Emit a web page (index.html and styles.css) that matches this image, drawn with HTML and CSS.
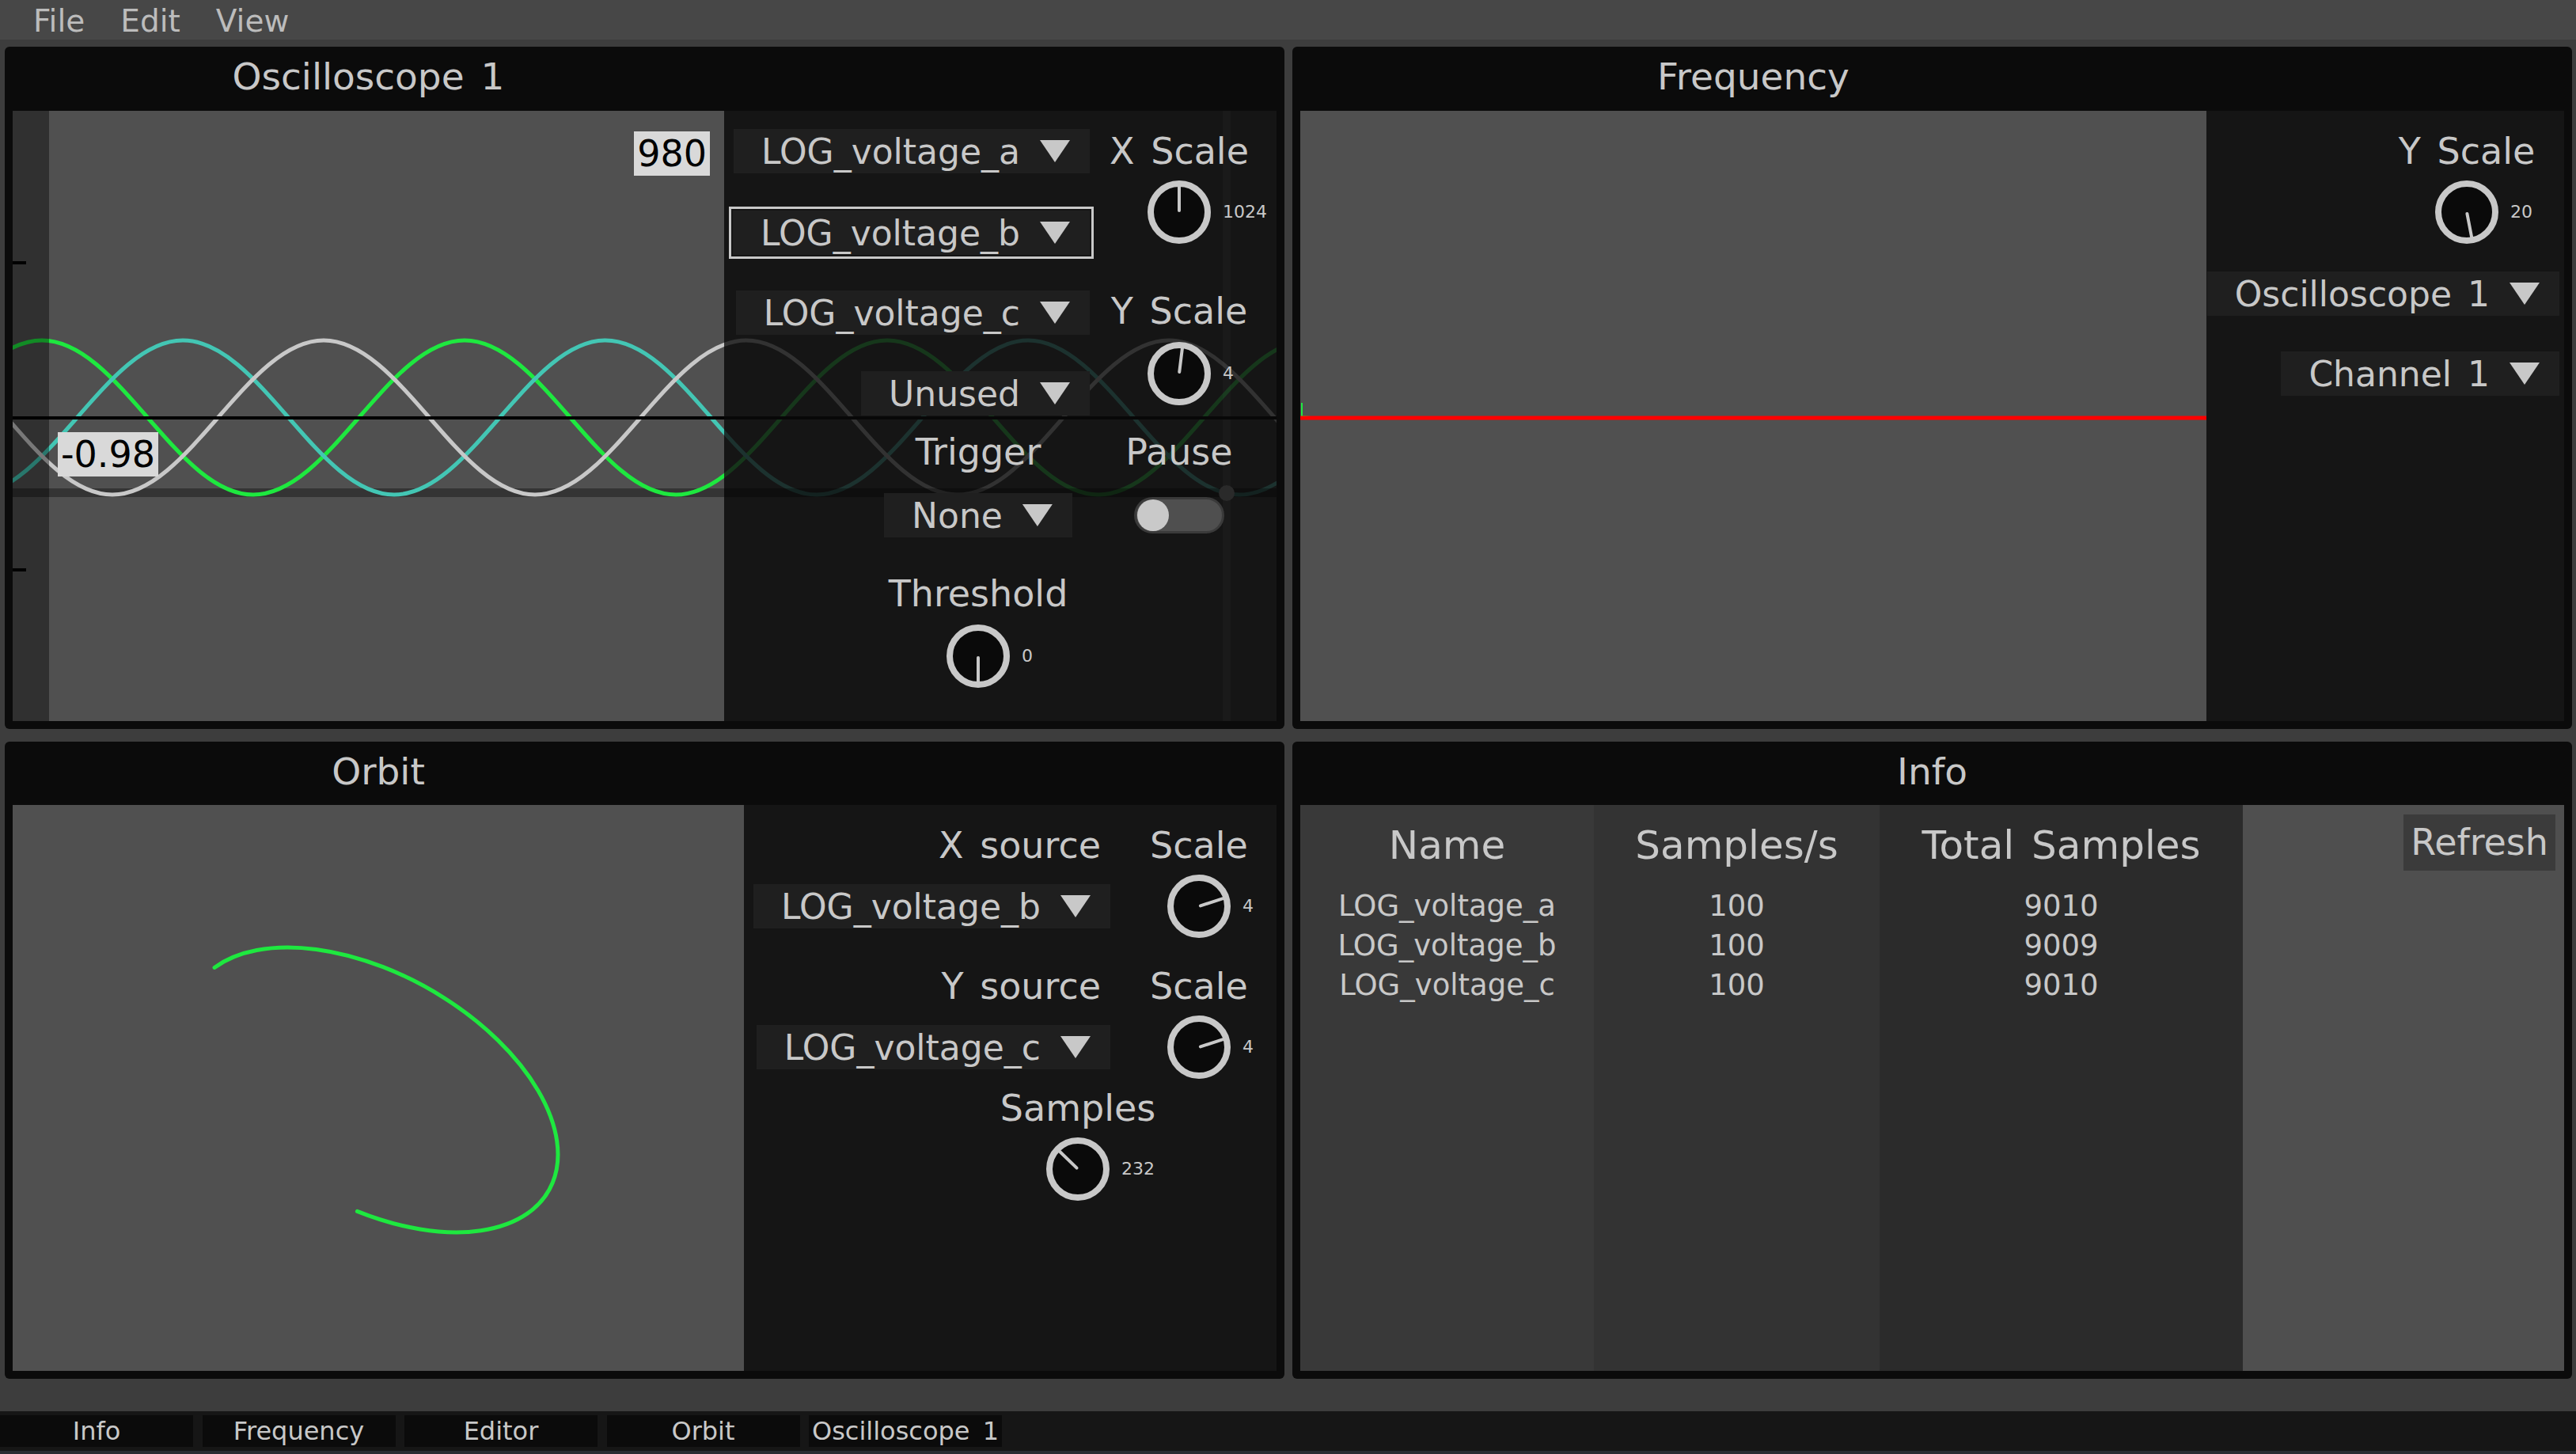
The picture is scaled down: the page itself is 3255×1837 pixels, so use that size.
FILE: index.html
```html
<!DOCTYPE html>
<html>
<head>
<meta charset="utf-8">
<title>Scope</title>
<link rel="stylesheet" href="styles.css">
</head>
<body>
<div class="app">
  <nav class="menubar"><span>File</span><span>Edit</span><span>View</span></nav>

  <main class="workspace">
    <!-- Oscilloscope -->
    <section class="panel scope">
      <header class="panel-head"><h2 class="title">Oscilloscope 1</h2></header>
      <div class="panel-body">
        <div class="plot">
          <svg class="layer" viewBox="16 140 899 771" preserveAspectRatio="none">
            <rect x="16" y="617" width="899" height="11" fill="rgba(0,0,0,0.35)"/>
            <path class="w-green" d="M-214,625 C-117,625 -44,430 53,430 S223,625 320,625 S490,430 587,430 S757,625 854,625 S1024,430 1121,430 S1291,625 1388,625 S1558,430 1655,430"/>
            <path class="w-teal" d="M-36,625 C61,625 134,430 231,430 S401,625 498,625 S668,430 765,430 S935,625 1032,625 S1202,430 1299,430 S1469,625 1566,625 S1736,430 1833,430"/>
            <path class="w-gray" d="M-125,430 C-28,430 45,625 142,625 S312,430 409,430 S579,625 676,625 S846,430 943,430 S1113,625 1210,625 S1380,430 1477,430 S1647,625 1744,625"/>
            <line x1="16" y1="528" x2="915" y2="528" stroke="#000" stroke-width="4"/>
            <rect x="16" y="140" width="46" height="771" fill="rgba(0,0,0,0.4)"/>
            <line x1="16" y1="332" x2="33" y2="332" stroke="#000" stroke-width="4"/>
            <line x1="16" y1="720" x2="33" y2="720" stroke="#000" stroke-width="4"/>
          </svg>
          <span class="badge badge-max">980</span>
          <span class="badge badge-cur">-0.98</span>
        </div>
        <div class="controls scope-controls">
          <svg class="layer" viewBox="915 140 698 771" preserveAspectRatio="none">
            <rect x="1545" y="140" width="10" height="771" fill="rgba(255,255,255,0.025)"/>
            <g opacity="0.16">
              <path class="w-green" d="M-214,625 C-117,625 -44,430 53,430 S223,625 320,625 S490,430 587,430 S757,625 854,625 S1024,430 1121,430 S1291,625 1388,625 S1558,430 1655,430"/>
              <path class="w-teal" d="M-36,625 C61,625 134,430 231,430 S401,625 498,625 S668,430 765,430 S935,625 1032,625 S1202,430 1299,430 S1469,625 1566,625 S1736,430 1833,430"/>
              <path class="w-gray" d="M-125,430 C-28,430 45,625 142,625 S312,430 409,430 S579,625 676,625 S846,430 943,430 S1113,625 1210,625 S1380,430 1477,430 S1647,625 1744,625"/>
            </g>
            <rect x="915" y="617" width="698" height="11" fill="rgba(0,0,0,0.3)"/>
            <line x1="915" y1="528" x2="1613" y2="528" stroke="#080808" stroke-width="4"/>
            <circle cx="1550" cy="623" r="10" fill="#2a2a2a"/>
          </svg>

          <div class="col scope-left">
            <div class="dd dd-a"><span>LOG_voltage_a</span><i class="arrow"></i></div>
            <div class="dd dd-b focus"><span>LOG_voltage_b</span><i class="arrow"></i></div>
            <div class="dd dd-c"><span>LOG_voltage_c</span><i class="arrow"></i></div>
            <div class="dd dd-u"><span>Unused</span><i class="arrow"></i></div>
            <div class="trig">
              <div class="label">Trigger</div>
              <div class="dd dd-none"><span>None</span><i class="arrow"></i></div>
              <div class="label thr-label">Threshold</div>
              <div class="knob thr-knob" style="--a:180deg"><i class="needle"></i><span class="kval">0</span></div>
            </div>
          </div>

          <div class="col scope-right">
            <div class="label xs-label">X Scale</div>
            <div class="knob xs-knob" style="--a:0deg"><i class="needle"></i><span class="kval">1024</span></div>
            <div class="label ys-label">Y Scale</div>
            <div class="knob ys-knob" style="--a:7deg"><i class="needle"></i><span class="kval">4</span></div>
            <div class="label pause-label">Pause</div>
            <div class="toggle"></div>
          </div>
        </div>
      </div>
    </section>

    <!-- Frequency -->
    <section class="panel freq">
      <header class="panel-head"><h2 class="title">Frequency</h2></header>
      <div class="panel-body">
        <div class="plot">
          <svg class="layer" viewBox="1643 140 1145 771" preserveAspectRatio="none">
            <polyline points="1645,509 1645,526 1656,527" fill="none" stroke="#1ee83f" stroke-width="2"/>
            <line x1="1643" y1="528" x2="2788" y2="528" stroke="#ff0000" stroke-width="5"/>
          </svg>
        </div>
        <div class="controls freq-controls">
          <div class="fys">
            <div class="label">Y Scale</div>
            <div class="knob fys-knob" style="--a:169deg"><i class="needle"></i><span class="kval">20</span></div>
          </div>
          <div class="dd dd-src"><span>Oscilloscope 1</span><i class="arrow"></i></div>
          <div class="dd dd-ch"><span>Channel 1</span><i class="arrow"></i></div>
        </div>
      </div>
    </section>

    <!-- Orbit -->
    <section class="panel bottom orbit">
      <header class="panel-head"><h2 class="title">Orbit</h2></header>
      <div class="panel-body">
        <div class="plot">
          <svg class="layer" viewBox="16 1017 924 715" preserveAspectRatio="none">
            <path d="M271,1222.4 A257.2,146.6 29.6 1 1 451.4,1530.4" fill="none" stroke="#1ee83f" stroke-width="5" stroke-linecap="round"/>
          </svg>
        </div>
        <div class="controls orbit-controls">
          <div class="orow orow-lab1">
            <div class="ocell-l"><span class="label src-label">X source</span></div>
            <div class="ocell-r"><span class="label">Scale</span></div>
          </div>
          <div class="orow orow-ctl">
            <div class="ocell-l"><div class="dd"><span>LOG_voltage_b</span><i class="arrow"></i></div></div>
            <div class="ocell-r"><div class="knob" style="--a:72deg"><i class="needle"></i><span class="kval">4</span></div></div>
          </div>
          <div class="orow orow-lab2">
            <div class="ocell-l"><span class="label src-label">Y source</span></div>
            <div class="ocell-r"><span class="label">Scale</span></div>
          </div>
          <div class="orow orow-ctl">
            <div class="ocell-l"><div class="dd"><span>LOG_voltage_c</span><i class="arrow"></i></div></div>
            <div class="ocell-r"><div class="knob" style="--a:72deg"><i class="needle"></i><span class="kval">4</span></div></div>
          </div>
          <div class="samples">
            <div class="label">Samples</div>
            <div class="knob samp-knob" style="--a:-46deg"><i class="needle"></i><span class="kval">232</span></div>
          </div>
        </div>
      </div>
    </section>

    <!-- Info -->
    <section class="panel bottom info">
      <header class="panel-head"><h2 class="title">Info</h2></header>
      <div class="panel-body">
        <div class="info-table">
          <div class="icol c1">
            <div class="ihead">Name</div>
            <div class="irow first">LOG_voltage_a</div>
            <div class="irow">LOG_voltage_b</div>
            <div class="irow">LOG_voltage_c</div>
          </div>
          <div class="icol c2">
            <div class="ihead">Samples/s</div>
            <div class="irow first">100</div>
            <div class="irow">100</div>
            <div class="irow">100</div>
          </div>
          <div class="icol c3">
            <div class="ihead">Total Samples</div>
            <div class="irow first">9010</div>
            <div class="irow">9009</div>
            <div class="irow">9010</div>
          </div>
          <div class="icol c4">
            <button class="refresh">Refresh</button>
          </div>
        </div>
      </div>
    </section>
  </main>

  <footer class="statusbar">
    <div class="tab">Info</div>
    <div class="tab">Frequency</div>
    <div class="tab">Editor</div>
    <div class="tab">Orbit</div>
    <div class="tab">Oscilloscope 1</div>
  </footer>
</div>
</body>
</html>
```

FILE: styles.css
```css
* { box-sizing: border-box; margin: 0; padding: 0; }

html, body {
  width: 3255px;
  height: 1837px;
  overflow: hidden;
}

body {
  background: #3d3d3d;
  font-family: "DejaVu Sans", "Liberation Sans", sans-serif;
  color: #c8c8c8;
  font-size: 46px;
  word-spacing: 6px;
}

.app {
  display: flex;
  flex-direction: column;
  height: 1837px;
}

/* ---------- menu ---------- */
.menubar {
  height: 50px;
  flex: none;
  background: #474747;
  display: flex;
  gap: 45px;
  padding: 3px 0 0 42px;
  font-size: 39px;
  line-height: 47px;
  color: #bcbcbc;
}

/* ---------- workspace ---------- */
.workspace {
  flex: 1;
  display: grid;
  grid-template-columns: 1617px 1617px;
  grid-template-rows: 862px 805px;
  gap: 16px 10px;
  padding: 9px 5px 0 6px;
  align-content: start;
}

.panel {
  background: #0b0b0b;
  border-radius: 6px;
  padding: 0 10px 10px;
  display: flex;
  flex-direction: column;
  min-height: 0;
}

.scope { --plot-w: 899px; }
.freq  { --plot-w: 1145px; }
.orbit { --plot-w: 924px; }
.info  { --plot-w: 1597px; }

.panel-head {
  height: 81px;
  flex: none;
  display: flex;
}
.panel.bottom .panel-head { height: 80px; }

.title {
  width: var(--plot-w);
  text-align: center;
  font-weight: normal;
  font-size: 47px;
  line-height: 76px;
  white-space: nowrap;
}

.panel-body {
  flex: 1;
  display: flex;
  min-height: 0;
}

.plot {
  width: var(--plot-w);
  flex: none;
  background: #505050;
  position: relative;
  overflow: hidden;
}

.controls {
  flex: 1;
  background: #151515;
  position: relative;
  overflow: hidden;
}

.layer {
  position: absolute;
  left: 0;
  top: 0;
  width: 100%;
  height: 100%;
  display: block;
}

.w-green, .w-teal, .w-gray { fill: none; stroke-width: 5; }
.w-green { stroke: #1ee83f; }
.w-teal  { stroke: #43c6b4; }
.w-gray  { stroke: #c8c8c8; }

.badge {
  position: absolute;
  background: #d9d9d9;
  color: #000;
  font-size: 46px;
  line-height: 56px;
  padding: 0 4px;
  word-spacing: 0;
}
.badge-max { right: 18px; top: 26px; }
.badge-cur { left: 57px; top: 406px; }

/* ---------- shared widgets ---------- */
.label {
  font-size: 46px;
  line-height: 56px;
  height: 56px;
  white-space: nowrap;
}

.dd {
  display: flex;
  align-items: center;
  gap: 25px;
  height: 56px;
  padding: 0 25px 0 35px;
  background: #1f1f1f;
  font-size: 44px;
  white-space: nowrap;
  flex: none;
}
.dd.focus {
  outline: 3px solid #c8c8c8;
  outline-offset: 2px;
}
.arrow {
  display: block;
  width: 38px;
  height: 28px;
  background: #c8c8c8;
  clip-path: polygon(0 0, 100% 0, 50% 100%);
}

.knob {
  position: relative;
  width: 80px;
  height: 80px;
  flex: none;
  border: 8px solid #c8c8c8;
  border-radius: 50%;
  background: #0a0a0a;
}
.needle {
  position: absolute;
  left: 50%;
  bottom: 50%;
  width: 4px;
  height: 38px;
  margin-left: -2px;
  background: #c8c8c8;
  border-radius: 2px;
  transform-origin: 50% 100%;
  transform: rotate(var(--a));
}
.kval {
  position: absolute;
  left: calc(100% + 23px);
  top: 50%;
  transform: translateY(-50%);
  font-size: 22px;
  line-height: 26px;
  white-space: nowrap;
}

.toggle {
  position: relative;
  width: 114px;
  height: 46px;
  border-radius: 23px;
  background: #4f4f4f;
  border: 3px solid #3a3a3a;
}
.toggle::before {
  content: "";
  position: absolute;
  left: 1px;
  top: 0;
  width: 40px;
  height: 40px;
  border-radius: 50%;
  background: #c9c9c9;
}

/* ---------- oscilloscope controls ---------- */
.scope-controls { display: flex; }
.col {
  position: relative;
  z-index: 1;
  display: flex;
  flex-direction: column;
}
.scope-left {
  width: 475px;
  align-items: flex-end;
  padding-right: 13px;
}
.scope-left .dd-a { margin-top: 23px; }
.scope-left .dd-b { margin-top: 47px; }
.scope-left .dd-c { margin-top: 45px; }
.scope-left .dd-u { margin-top: 46px; }

.trig {
  width: 282px;
  margin-top: 18px;
  display: flex;
  flex-direction: column;
  align-items: center;
}
.trig .dd-none { margin-top: 24px; }
.trig .thr-label { margin-top: 43px; }
.trig .thr-knob { margin-top: 11px; }

.scope-right {
  width: 200px;
  align-items: center;
}
.xs-label { margin-top: 23px; }
.xs-knob { margin-top: 9px; }
.ys-label { margin-top: 57px; }
.ys-knob { margin-top: 11px; }
.pause-label { margin-top: 31px; }
.toggle { margin-top: 29px; }

/* ---------- frequency controls ---------- */
.freq-controls {
  display: flex;
  flex-direction: column;
  align-items: flex-end;
  padding-right: 6px;
}
.fys {
  width: 172px;
  margin: 23px 31px 0 0;
  display: flex;
  flex-direction: column;
  align-items: center;
}
.fys-knob { margin-top: 9px; }
.dd-src { margin-top: 35px; }
.dd-ch { margin-top: 45px; }

/* ---------- orbit controls ---------- */
.orbit-controls {
  display: flex;
  flex-direction: column;
}
.orow {
  display: flex;
  align-items: center;
}
.orow-lab1 { margin-top: 23px; height: 56px; }
.orow-ctl { margin-top: 9px; height: 80px; }
.orow-lab2 { margin-top: 33px; height: 56px; }
.ocell-l {
  width: 478px;
  display: flex;
  justify-content: flex-end;
  padding-right: 15px;
}
.ocell-r {
  width: 194px;
  display: flex;
  justify-content: center;
}
.src-label { margin-right: 12px; }

.samples {
  width: 300px;
  margin: 9px 0 0 272px;
  display: flex;
  flex-direction: column;
  align-items: center;
}
.samp-knob { margin-top: 9px; }

/* ---------- info ---------- */
.info-table {
  flex: 1;
  display: grid;
  grid-template-columns: 371px 361px 459px 1fr;
}
.icol {
  display: flex;
  flex-direction: column;
  align-items: center;
  padding-top: 23px;
}
.c1 { background: #393939; }
.c2 { background: #333333; }
.c3 { background: #2b2b2b; }
.c4 {
  background: #4f4f4f;
  align-items: flex-end;
  padding: 12px 11px 0 0;
}
.ihead {
  font-size: 50px;
  line-height: 56px;
  white-space: nowrap;
}
.irow {
  font-size: 37px;
  line-height: 50px;
  white-space: nowrap;
}
.irow.first { margin-top: 24px; }

.refresh {
  font: inherit;
  font-size: 46px;
  line-height: 57px;
  color: #c8c8c8;
  background: #3b3b3b;
  border: none;
  padding: 7px 9px;
}

/* ---------- status bar ---------- */
.statusbar {
  height: 54px;
  flex: none;
  background: #161616;
  display: flex;
  gap: 11.5px;
  padding-top: 5px;
  border-bottom: 4px solid #2a2d31;
}
.tab {
  width: 244px;
  height: 40px;
  background: #0b0b0b;
  font-size: 32px;
  line-height: 40px;
  text-align: center;
  white-space: nowrap;
}
```
